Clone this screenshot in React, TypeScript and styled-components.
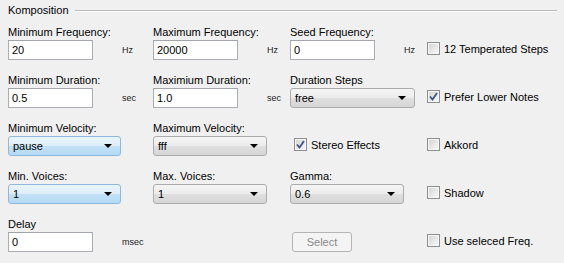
import React from "react";
import styled, { createGlobalStyle, css } from "styled-components";

const GlobalStyle = createGlobalStyle`
  html, body { margin: 0; padding: 0; background: #f0f0f0; }
  body { font-family: "Liberation Sans", Arial, sans-serif; font-size: 11px; color: #000; }
`;

const Panel = styled.div`
  width: 564px;
  height: 263px;
  box-sizing: border-box;
  padding: 4px 7px 0 8px;
  background: #f0f0f0;
`;

const TitleRow = styled.div`
  display: flex;
  align-items: center;
  gap: 6px;
  height: 12px;
  line-height: 12px;
`;

const TitleText = styled.span`
  font-size: 11px;
`;

const TitleLine = styled.div`
  flex: 1;
  height: 1px;
  background: #b9b9b9;
  box-shadow: 0 1px 0 #ffffff;
`;

const Grid = styled.div`
  display: grid;
  grid-template-columns: 145px 137px 137px 1fr;
  grid-auto-rows: 36px;
  row-gap: 12px;
  margin-top: 8px;
`;

const Cell = styled.div<{ $indent?: number }>`
  display: flex;
  flex-direction: column;
  padding-left: ${(p) => p.$indent ?? 0}px;
`;

const Label = styled.div`
  height: 16px;
  line-height: 16px;
  font-size: 11px;
  color: #000;
  white-space: nowrap;
`;

const ControlRow = styled.div`
  display: flex;
  align-items: center;
  height: 20px;
`;

const TextBox = styled.div`
  box-sizing: border-box;
  width: 85px;
  height: 20px;
  border: 1px solid #abadb3;
  border-top-color: #a2a5ab;
  background: #fff;
  padding-left: 3px;
  line-height: 18px;
  font-size: 11px;
`;

const Unit = styled.span`
  margin-left: 29px;
  font-size: 9px;
  color: #222;
`;

const Combo = styled.div<{ $width: number; $active?: boolean }>`
  box-sizing: border-box;
  width: ${(p) => p.$width}px;
  height: 20px;
  border: 1px solid #acacac;
  border-radius: 3px;
  display: flex;
  align-items: center;
  justify-content: space-between;
  padding: 0 8px 0 4px;
  font-size: 11px;
  ${(p) =>
    p.$active
      ? css`
          border-color: #8fb8da;
          background: linear-gradient(#eaf5fc 0%, #dcedf9 50%, #c2e1f6 51%, #b5daf3 100%);
        `
      : css`
          background: linear-gradient(#f4f4f4 0%, #ececec 50%, #dfdfdf 51%, #d6d6d6 100%);
        `}
`;

const Arrow = styled.span`
  width: 0;
  height: 0;
  border-left: 4px solid transparent;
  border-right: 4px solid transparent;
  border-top: 4px solid #000;
`;

const CheckWrap = styled.label`
  display: flex;
  align-items: center;
  gap: 4px;
  font-size: 11px;
  white-space: nowrap;
  margin-top: -3px;
`;

const Box = styled.span`
  box-sizing: border-box;
  width: 13px;
  height: 13px;
  border: 1px solid #8e8f8f;
  background: linear-gradient(135deg, #d2d2d2 0%, #e6e6e6 50%, #fafafa 100%);
  box-shadow: inset 0 0 0 1px #f6f6f6;
  display: flex;
  align-items: center;
  justify-content: center;
`;

const Button = styled.div`
  box-sizing: border-box;
  width: 60px;
  height: 20px;
  margin-left: 2px;
  border: 1px solid #b5b5b5;
  border-radius: 3px;
  background: #f4f4f4;
  color: #8a8a8a;
  font-size: 11px;
  display: flex;
  align-items: center;
  justify-content: center;
`;

const Check = ({ label, checked }: { label: string; checked?: boolean }) => (
  <CheckWrap>
    <Box>
      {checked && (
        <svg width="9" height="9" viewBox="0 0 9 9">
          <path d="M1 4.5 L3.5 7.5 L8 1" stroke="#3d5688" strokeWidth="1.8" fill="none" />
        </svg>
      )}
    </Box>
    {label}
  </CheckWrap>
);

const Field = ({ label, value, unit }: { label: string; value: string; unit: string }) => (
  <Cell>
    <Label>{label}</Label>
    <ControlRow>
      <TextBox>{value}</TextBox>
      <Unit>{unit}</Unit>
    </ControlRow>
  </Cell>
);

const Select = ({ label, value, width, active }: { label: string; value: string; width: number; active?: boolean }) => (
  <Cell>
    <Label>{label}</Label>
    <ControlRow>
      <Combo $width={width} $active={active}>
        <span>{value}</span>
        <Arrow />
      </Combo>
    </ControlRow>
  </Cell>
);

const CheckCell = ({ label, checked, indent }: { label: string; checked?: boolean; indent?: number }) => (
  <Cell $indent={indent}>
    <Label />
    <ControlRow>
      <Check label={label} checked={checked} />
    </ControlRow>
  </Cell>
);

export default function App() {
  return (
    <>
      <GlobalStyle />
      <Panel>
        <TitleRow>
          <TitleText>Komposition</TitleText>
          <TitleLine />
        </TitleRow>
        <Grid>
          <Field label="Minimum Frequency:" value="20" unit="Hz" />
          <Field label="Maximum Frequency:" value="20000" unit="Hz" />
          <Field label="Seed Frequency:" value="0" unit="Hz" />
          <CheckCell label="12 Temperated Steps" />

          <Field label="Minimum Duration:" value="0.5" unit="sec" />
          <Field label="Maximium Duration:" value="1.0" unit="sec" />
          <Select label="Duration Steps" value="free" width={125} />
          <CheckCell label="Prefer Lower Notes" checked />

          <Select label="Minimum Velocity:" value="pause" width={113} active />
          <Select label="Maximum Velocity:" value="fff" width={114} />
          <CheckCell label="Stereo Effects" checked indent={4} />
          <CheckCell label="Akkord" />

          <Select label="Min. Voices:" value="1" width={113} active />
          <Select label="Max. Voices:" value="1" width={114} />
          <Select label="Gamma:" value="0.6" width={114} />
          <CheckCell label="Shadow" />

          <Field label="Delay" value="0" unit="msec" />
          <Cell />
          <Cell>
            <Label />
            <ControlRow>
              <Button>Select</Button>
            </ControlRow>
          </Cell>
          <CheckCell label="Use seleced Freq." />
        </Grid>
      </Panel>
    </>
  );
}
